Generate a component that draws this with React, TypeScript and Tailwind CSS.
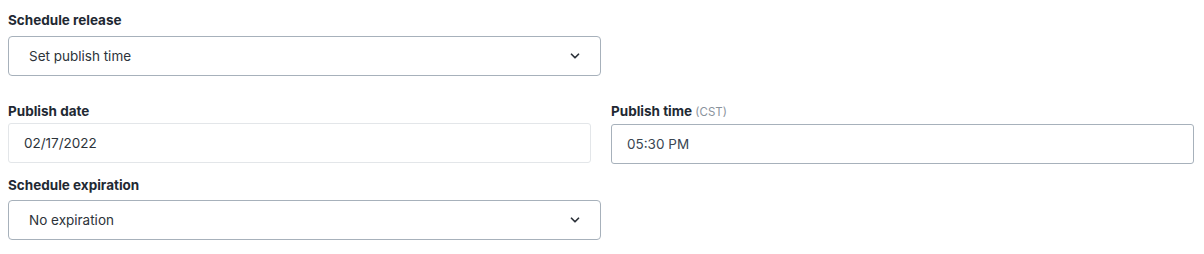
import { ChevronDown } from 'lucide-react';

function Label({ children, className = '' }: { children: React.ReactNode; className?: string }) {
  return (
    <div className={`text-[13.5px] leading-5 font-bold text-[#1f2933] ${className}`}>{children}</div>
  );
}

function SelectBox({ value }: { value: string }) {
  return (
    <div className="w-[593px] h-10 flex items-center justify-between border border-[#a7b1bb] rounded-[4px] pl-5 pr-[18px] bg-white">
      <span className="text-[13.5px] text-[#2d333a]">{value}</span>
      <ChevronDown size={14} strokeWidth={3} className="text-[#2d333a]" />
    </div>
  );
}

export default function App() {
  return (
    <div className="w-[1204px] h-[254px] bg-white pt-[10px] pl-2 pr-[10px] font-['Inter',sans-serif]">
      <Label className="mb-[6px]">Schedule release</Label>
      <SelectBox value="Set publish time" />

      <div className="grid grid-cols-2 gap-x-5 mt-[25px]">
        <div>
          <Label className="mb-[2px]">Publish date</Label>
          <div className="h-10 flex items-center border border-[#e3e6e9] rounded-[3px] px-[15px] text-[13.5px] text-[#2d333a]">
            02/17/2022
          </div>
        </div>
        <div>
          <Label className="mb-[2px]">
            Publish time <span className="text-[11.5px] font-normal text-[#8a939c]">(CST)</span>
          </Label>
          <div className="h-10 flex items-center border border-[#a7b1bb] rounded-[3px] px-[15px] text-[13.5px] text-[#3a4652]">
            05:30 PM
          </div>
        </div>
      </div>

      <Label className="mt-[11px] mb-[5px]">Schedule expiration</Label>
      <SelectBox value="No expiration" />
    </div>
  );
}
